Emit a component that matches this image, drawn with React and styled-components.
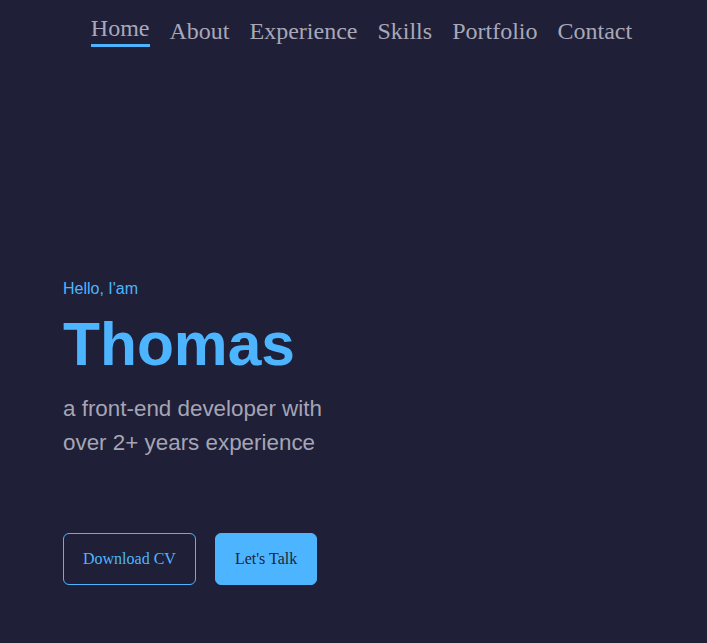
import React from "react";
import styled, { createGlobalStyle } from "styled-components";

const GlobalStyle = createGlobalStyle`
  body {
    margin: 0;
    background: #1f1f38;
    font-family: "Liberation Serif", "Times New Roman", serif;
  }
`;

const links = ["Home", "About", "Experience", "Skills", "Portfolio", "Contact"];

const App = () => {
  return (
    <Page>
      <GlobalStyle />
      <Nav>
        {links.map((l, i) => (
          <NavLink key={l} active={i === 0}>
            {l}
          </NavLink>
        ))}
      </Nav>
      <Hero>
        <Greeting>Hello, I'am</Greeting>
        <Name>Thomas</Name>
        <Intro>
          a front-end developer with
          <br />
          over 2+ years experience
        </Intro>
        <Buttons>
          <Button>Download CV</Button>
          <Button primary>Let's Talk</Button>
        </Buttons>
      </Hero>
    </Page>
  );
};

export default App;

const Page = styled.div`
  min-height: 643px;
  background: #1f1f38;
`;

const Nav = styled.nav`
  display: flex;
  justify-content: center;
  gap: 20px;
  padding: 17px 0 0 16px;
`;

const NavLink = styled.a`
  font-size: 24px;
  line-height: 28px;
  color: #a8a8b8;
  cursor: pointer;
  padding-bottom: 2px;
  border-bottom: 3px solid ${(p) => (p.active ? "#4db5ff" : "transparent")};
  transform: ${(p) => (p.active ? "translateY(-3px)" : "none")};
`;

const Hero = styled.section`
  display: flex;
  flex-direction: column;
  align-items: flex-start;
  padding: 229px 0 0 63px;
`;

const Greeting = styled.p`
  margin: 0;
  font-family: "Liberation Sans", Arial, sans-serif;
  font-size: 16px;
  line-height: 20px;
  color: #4db5ff;
`;

const Name = styled.h1`
  margin: 10px 0 0;
  font-family: "Liberation Sans", Arial, sans-serif;
  font-size: 60.5px;
  font-weight: 700;
  line-height: 70px;
  color: #4db5ff;
`;

const Intro = styled.p`
  margin: 13px 0 0;
  font-family: "Liberation Sans", Arial, sans-serif;
  font-size: 22.4px;
  line-height: 34px;
  color: #a5a5b5;
`;

const Buttons = styled.div`
  display: flex;
  gap: 19px;
  margin-top: 73px;
`;

const Button = styled.button`
  height: 52px;
  padding: 0 19px;
  border: 1px solid #4db5ff;
  border-radius: 6px;
  font-family: "Liberation Serif", "Times New Roman", serif;
  font-size: 16px;
  background: ${(p) => (p.primary ? "#4db5ff" : "transparent")};
  color: ${(p) => (p.primary ? "#1f1f38" : "#4db5ff")};
  cursor: pointer;
`;
